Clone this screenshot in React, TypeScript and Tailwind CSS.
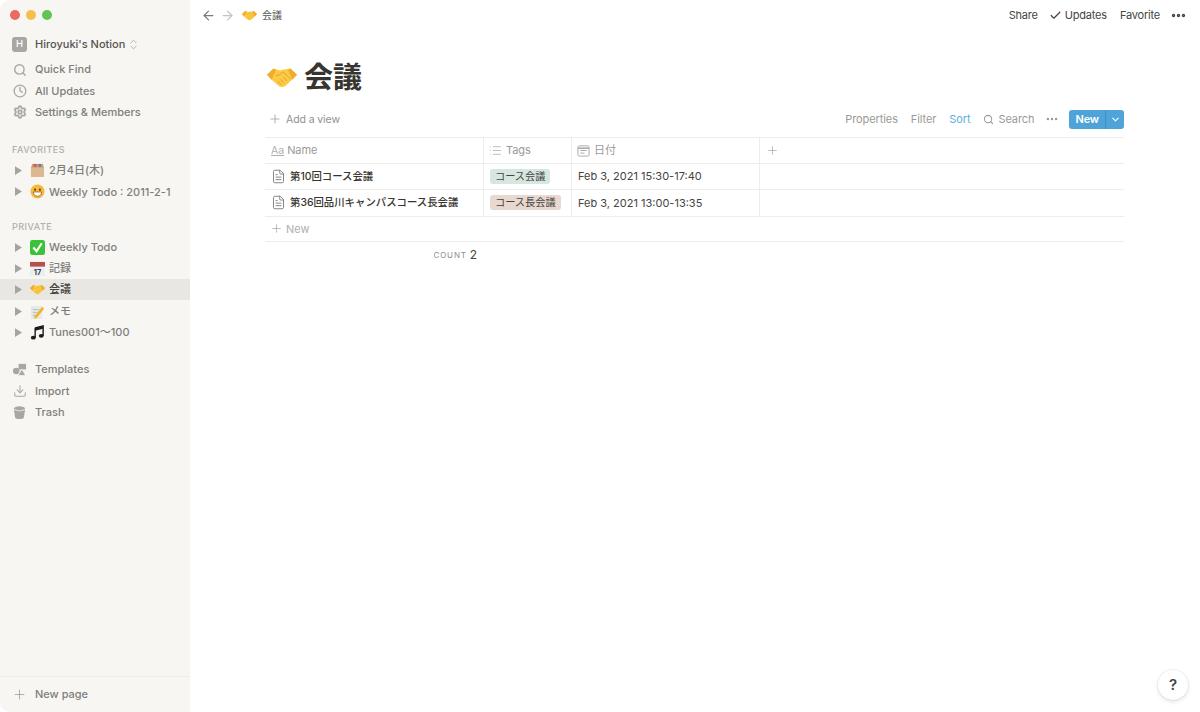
import type { ReactNode } from "react";
import {
  ArrowLeft,
  ArrowRight,
  Check,
  ChevronDown,
  ChevronsUpDown,
  Clock,
  Download,
  Ellipsis,
  FileText,
  List,
  Plus,
  Search,
  Settings,
} from "lucide-react";

const font = "font-['Inter','Noto_Sans_CJK_JP',sans-serif]";

function Handshake({ className }: { className?: string }) {
  return (
    <svg viewBox="0 0 32 22" className={className}>
      <path d="M0 8 L7 1.5 L14 3.5 L18 2.5 L25 1.5 L32 8 L26.5 13.5 L19.5 20 Q15.5 22.5 12 19.5 L5.5 14 Z" fill="#fbcb45" />
      <path d="M0 8 L7 1.5 L9.5 3 L5 13.5 Z" fill="#f2ac2c" />
      <path d="M32 8 L25 1.5 L22.5 3 L27 13.5 Z" fill="#f2ac2c" />
      <path d="M10 9 Q14 9 17 5 L25 12.5 M11.5 15 L15 18.5 M14.5 13 L18 16.5 M17.5 10.5 L21 14.5" stroke="#e3a01c" strokeWidth="1" fill="none" strokeLinecap="round" />
    </svg>
  );
}

function Triangle() {
  return (
    <svg viewBox="0 0 8 10" className="h-[9px] w-[7px] text-[#a5a4a1]">
      <path d="M0 0 L8 5 L0 10 Z" fill="currentColor" />
    </svg>
  );
}

function BoxEmoji() {
  return (
    <svg viewBox="0 0 16 16" className="h-[15px] w-[15px]">
      <rect x="1" y="3" width="14" height="12" rx="1" fill="#dcb78f" />
      <rect x="2" y="1" width="12" height="4" fill="#c9a27a" />
      <rect x="4" y="1" width="3" height="3" fill="#d9534f" />
      <rect x="9" y="1" width="3" height="3" fill="#5b7fc7" />
    </svg>
  );
}

function SmileEmoji() {
  return (
    <svg viewBox="0 0 16 16" className="h-[15px] w-[15px]">
      <circle cx="8" cy="8" r="7.5" fill="#f6b93b" />
      <circle cx="5.4" cy="6" r="1.1" fill="#5b3a16" />
      <circle cx="10.6" cy="6" r="1.1" fill="#5b3a16" />
      <path d="M3.5 8.5 H12.5 Q12 13 8 13 Q4 13 3.5 8.5 Z" fill="#fff" stroke="#7b4a16" strokeWidth="0.7" />
    </svg>
  );
}

function CheckEmoji() {
  return (
    <svg viewBox="0 0 16 16" className="h-[15px] w-[15px]">
      <rect width="16" height="16" rx="2.5" fill="#3cc13b" />
      <path d="M3.5 8 L7 12 L12.5 3.5" stroke="#fff" strokeWidth="2.2" fill="none" />
    </svg>
  );
}

function CalendarEmoji() {
  return (
    <svg viewBox="0 0 16 16" className="h-[15px] w-[15px]">
      <rect y="1" width="16" height="15" rx="1" fill="#eceff1" />
      <path d="M0 1 H16 V6 H0 Z" fill="#b5504c" />
      <text x="8" y="14.5" textAnchor="middle" fontSize="8" fontWeight="700" fill="#444" fontFamily="Inter">17</text>
    </svg>
  );
}

function MemoEmoji() {
  return (
    <svg viewBox="0 0 16 16" className="h-[15px] w-[15px]">
      <rect x="1" y="2" width="12" height="14" fill="#e7e9e4" />
      <path d="M3 6 H10 M3 9 H8 M3 12 H7" stroke="#9fb2c4" strokeWidth="0.8" />
      <path d="M5 13 L13 3 L15 5 L7 15 L4 15.5 Z" fill="#f0b429" />
    </svg>
  );
}

function NoteEmoji() {
  return (
    <svg viewBox="0 0 16 16" className="h-[15px] w-[15px]">
      <path d="M5.5 3 L14 1 V11.5" stroke="#1c1c1c" strokeWidth="1.5" fill="none" />
      <path d="M5.5 3 V13.5" stroke="#1c1c1c" strokeWidth="1.5" fill="none" />
      <path d="M5.5 3 L14 1 V4 L5.5 6 Z" fill="#1c1c1c" />
      <ellipse cx="3.5" cy="13.5" rx="2.6" ry="2" fill="#1c1c1c" />
      <ellipse cx="12" cy="11.5" rx="2.6" ry="2" fill="#1c1c1c" />
    </svg>
  );
}

function TemplatesIcon() {
  return (
    <svg viewBox="0 0 16 16" className="h-[15px] w-[15px] text-[#a8a7a4]">
      <circle cx="4.5" cy="9.5" r="3.5" fill="currentColor" />
      <rect x="7" y="2" width="8" height="6" fill="currentColor" />
      <path d="M6.5 14.5 L10.5 7.5 L14.5 14.5 Z" fill="currentColor" stroke="#f7f6f3" strokeWidth="0.8" />
    </svg>
  );
}

function TrashIcon() {
  return (
    <svg viewBox="0 0 16 16" className="h-[15px] w-[15px] text-[#a8a7a4]">
      <ellipse cx="8" cy="3.6" rx="6" ry="2.2" fill="currentColor" />
      <path d="M2 5 H14 L12.6 13.5 Q12 15 8 15 Q4 15 3.4 13.5 Z" fill="currentColor" />
      <path d="M2.5 5 Q8 7.6 13.5 5" stroke="#f7f6f3" strokeWidth="0.8" fill="none" />
    </svg>
  );
}

function NavRow({ icon, label }: { icon: ReactNode; label: string }) {
  return (
    <div className="flex h-[21.3px] items-center pl-3">
      <span className="flex w-[15px] justify-center">{icon}</span>
      <span className="ml-2 text-[11px] font-medium text-[#7f7e7a]">{label}</span>
    </div>
  );
}

function PageRow({ icon, label, active }: { icon: ReactNode; label: string; active?: boolean }) {
  return (
    <div className={`flex h-[21.3px] items-center pl-[15px] ${active ? "bg-[#e8e7e4]" : ""}`}>
      <Triangle />
      <span className="ml-[8px] flex w-[15px] justify-center">{icon}</span>
      <span className={`ml-[4px] text-[11px] font-medium ${active ? "text-[#45443f]" : "text-[#7f7e7a]"}`}>{label}</span>
    </div>
  );
}

function SectionLabel({ label }: { label: string }) {
  return <div className="pl-3 text-[9px] font-medium leading-3 tracking-[0.5px] text-[#b0afac]">{label}</div>;
}

function Sidebar() {
  return (
    <aside className="flex h-full w-[190px] shrink-0 flex-col rounded-l-[10px] bg-[#f7f6f3]">
      <div className="flex gap-[6px] pl-[10px] pt-[10px]">
        <span className="h-[10px] w-[10px] rounded-full bg-[#ec6a5e]" />
        <span className="h-[10px] w-[10px] rounded-full bg-[#f4bf4f]" />
        <span className="h-[10px] w-[10px] rounded-full bg-[#61c554]" />
      </div>
      <div className="mt-[14px] flex h-[20px] items-center pl-3">
        <span className="flex h-[15px] w-[15px] items-center justify-center rounded-[3px] bg-[#a8a7a4] text-[9.5px] font-medium text-white">H</span>
        <span className="ml-2 text-[11px] font-medium text-[#55544f]">Hiroyuki's Notion</span>
        <ChevronsUpDown className="ml-[2px] h-[13px] w-[13px] text-[#a5a4a1]" strokeWidth={1.5} />
      </div>
      <div className="mt-[5px]">
        <NavRow icon={<Search className="h-[14px] w-[14px] text-[#a8a7a4]" strokeWidth={2.4} />} label="Quick Find" />
        <NavRow icon={<Clock className="h-[14px] w-[14px] text-[#a8a7a4]" strokeWidth={2.2} />} label="All Updates" />
        <NavRow icon={<Settings className="h-[14px] w-[14px] text-[#a8a7a4]" strokeWidth={3} />} label="Settings & Members" />
      </div>
      <div className="mt-[21px]">
        <SectionLabel label="FAVORITES" />
      </div>
      <div className="mt-[4px]">
        <PageRow icon={<BoxEmoji />} label="2月4日(木)" />
        <PageRow icon={<SmileEmoji />} label="Weekly Todo : 2011-2-1" />
      </div>
      <div className="mt-[18.5px]">
        <SectionLabel label="PRIVATE" />
      </div>
      <div className="mt-[3.5px]">
        <PageRow icon={<CheckEmoji />} label="Weekly Todo" />
        <PageRow icon={<CalendarEmoji />} label="記録" />
        <PageRow icon={<Handshake className="h-[11px] w-[15px]" />} label="会議" active />
        <PageRow icon={<MemoEmoji />} label="メモ" />
        <PageRow icon={<NoteEmoji />} label="Tunes001〜100" />
      </div>
      <div className="mt-[16px]">
        <NavRow icon={<TemplatesIcon />} label="Templates" />
        <NavRow icon={<Download className="h-[14px] w-[14px] text-[#a8a7a4]" strokeWidth={1.8} />} label="Import" />
        <NavRow icon={<TrashIcon />} label="Trash" />
      </div>
      <div className="mt-auto flex h-[36px] items-center border-t border-[#eeedea] pl-3">
        <span className="flex w-[15px] justify-center">
          <Plus className="h-[15px] w-[15px] text-[#a8a7a4]" strokeWidth={1.5} />
        </span>
        <span className="ml-2 text-[11px] font-medium text-[#7f7e7a]">New page</span>
      </div>
    </aside>
  );
}

function TopBar() {
  return (
    <div className="flex h-[30px] items-center pl-[11px] pr-[13px]">
      <ArrowLeft className="h-[15px] w-[15px] text-[#7d7c78]" strokeWidth={2} />
      <ArrowRight className="ml-[4px] h-[15px] w-[15px] text-[#c4c3c0]" strokeWidth={2} />
      <Handshake className="ml-[7px] h-[11px] w-[15px]" />
      <span className="ml-[5px] text-[10px] text-[#55544f]">会議</span>
      <div className="ml-auto flex items-center text-[11px] tracking-[-0.2px] text-[#45443f]">
        <span>Share</span>
        <Check className="ml-[11px] h-[13px] w-[13px]" strokeWidth={2.2} />
        <span className="ml-[3px]">Updates</span>
        <span className="ml-[13px]">Favorite</span>
        <Ellipsis className="ml-[10px] h-[17px] w-[17px]" strokeWidth={2.8} />
      </div>
    </div>
  );
}

function Toolbar() {
  return (
    <div className="flex h-[26px] items-center pl-[3px] text-[11px] tracking-[-0.1px] text-[#9b9a97]">
      <Plus className="h-[14px] w-[14px] text-[#a8a7a4]" strokeWidth={1.5} />
      <span className="ml-[4px] pt-[1px] text-[10.5px] text-[#91908c]">Add a view</span>
      <div className="ml-auto flex items-center">
        <span>Properties</span>
        <span className="ml-[13px]">Filter</span>
        <span className="ml-[13px] text-[#5aaee0]">Sort</span>
        <Search className="ml-[13px] h-[11px] w-[11px]" strokeWidth={2.2} />
        <span className="ml-[4px]">Search</span>
        <Ellipsis className="ml-[11px] h-[14px] w-[14px]" strokeWidth={2.2} />
        <div className="ml-[10px] flex h-[19px] items-center rounded-[3px] bg-[#4ea4d8] text-white">
          <span className="px-[6px] text-[11px] font-semibold">New</span>
          <span className="flex h-full w-[19px] items-center justify-center border-l border-[#3f91c4]">
            <ChevronDown className="h-[11px] w-[11px]" strokeWidth={2.4} />
          </span>
        </div>
      </div>
    </div>
  );
}

function HeaderCell({ icon, label, className }: { icon: ReactNode; label: string; className: string }) {
  return (
    <div className={`flex items-center border-r border-[#ededec] ${className}`}>
      {icon}
      <span className="ml-[4px] text-[11px] tracking-[-0.1px] text-[#9b9a97]">{label}</span>
    </div>
  );
}

function Row({ name, tag, tagClass, date }: { name: string; tag: string; tagClass: string; date: string }) {
  return (
    <div className="flex h-[26.3px] border-b border-[#ededec]">
      <div className="flex w-[219px] items-center border-r border-[#ededec] pl-[6px]">
        <FileText className="h-[15px] w-[15px] text-[#7f7e7a]" strokeWidth={1.5} />
        <span className="ml-[4px] text-[10.4px] font-medium text-[#37352f]">{name}</span>
      </div>
      <div className="flex w-[88px] items-center border-r border-[#ededec] pl-[6px]">
        <span className={`rounded-[3px] px-[5px] text-[10.2px] leading-[15px] text-[#45443f] ${tagClass}`}>{tag}</span>
      </div>
      <div className="flex w-[188px] items-center border-r border-[#ededec] pl-[6px] text-[11px] text-[#45443f]">{date}</div>
    </div>
  );
}

export default function App() {
  return (
    <div className={`relative flex h-[712px] w-[1200px] overflow-hidden bg-white ${font}`}>
      <Sidebar />
      <main className="flex min-w-0 flex-1 flex-col">
        <TopBar />
        <div className="pl-[75px] pr-[76px]">
          <div className="mt-[30px] flex h-[34px] items-center pl-[2px]">
            <Handshake className="h-[21px] w-[30px]" />
            <h1 className="ml-[7px] text-[29px] font-bold leading-none text-[#37352f]">会議</h1>
          </div>
          <div className="mt-[12px]">
            <Toolbar />
          </div>
          <div className="mt-[5px] border-t border-[#ededec]">
            <div className="flex h-[26px] border-b border-[#ededec]">
              <HeaderCell
                className="w-[219px] pl-[6px]"
                icon={<span className="mr-[-1px] text-[10.5px] leading-3 text-[#b0afac] underline">Aa</span>}
                label="Name"
              />
              <HeaderCell
                className="w-[88px] pl-[5px]"
                icon={<List className="h-[13px] w-[13px] text-[#b0afac]" strokeWidth={1.5} />}
                label="Tags"
              />
              <HeaderCell
                className="w-[188px] pl-[5px]"
                icon={
                  <svg viewBox="0 0 14 14" className="h-[13px] w-[13px] text-[#a8a7a4]" fill="none" stroke="currentColor">
                    <rect x="1" y="2" width="12" height="11" rx="1.5" />
                    <path d="M1 4.5 H13" strokeWidth="1.6" />
                    <path d="M3.5 7 H10.5 M3.5 9.8 H8" />
                  </svg>
                }
                label="日付"
              />
              <div className="flex items-center pl-[6px]">
                <Plus className="h-[13px] w-[13px] text-[#b0afac]" strokeWidth={1.5} />
              </div>
            </div>
            <Row name="第10回コース会議" tag="コース会議" tagClass="bg-[#d6e6e0]" date="Feb 3, 2021 15:30-17:40" />
            <Row name="第36回品川キャンパスコース長会議" tag="コース長会議" tagClass="bg-[#e8d8cf]" date="Feb 3, 2021 13:00-13:35" />
            <div className="flex h-[25.5px] items-center border-b border-[#ededec] pl-[5px]">
              <Plus className="h-[13px] w-[13px] text-[#b0afac]" strokeWidth={1.5} />
              <span className="ml-[3px] text-[11px] text-[#b0afac]">New</span>
            </div>
            <div className="flex h-[26px] w-[212px] items-center justify-end">
              <span className="text-[8px] tracking-[0.8px] text-[#8f8e8a]">COUNT</span>
              <span className="ml-[3px] text-[12px] text-[#45443f]">2</span>
            </div>
          </div>
        </div>
      </main>
      <div className="absolute bottom-[12px] right-[12px] flex h-[30px] w-[30px] items-center justify-center rounded-full bg-white text-[15px] font-semibold text-[#45443f] shadow-[0_0_0_1px_rgba(15,15,15,0.05),0_2px_4px_rgba(15,15,15,0.1)]">
        ?
      </div>
    </div>
  );
}
